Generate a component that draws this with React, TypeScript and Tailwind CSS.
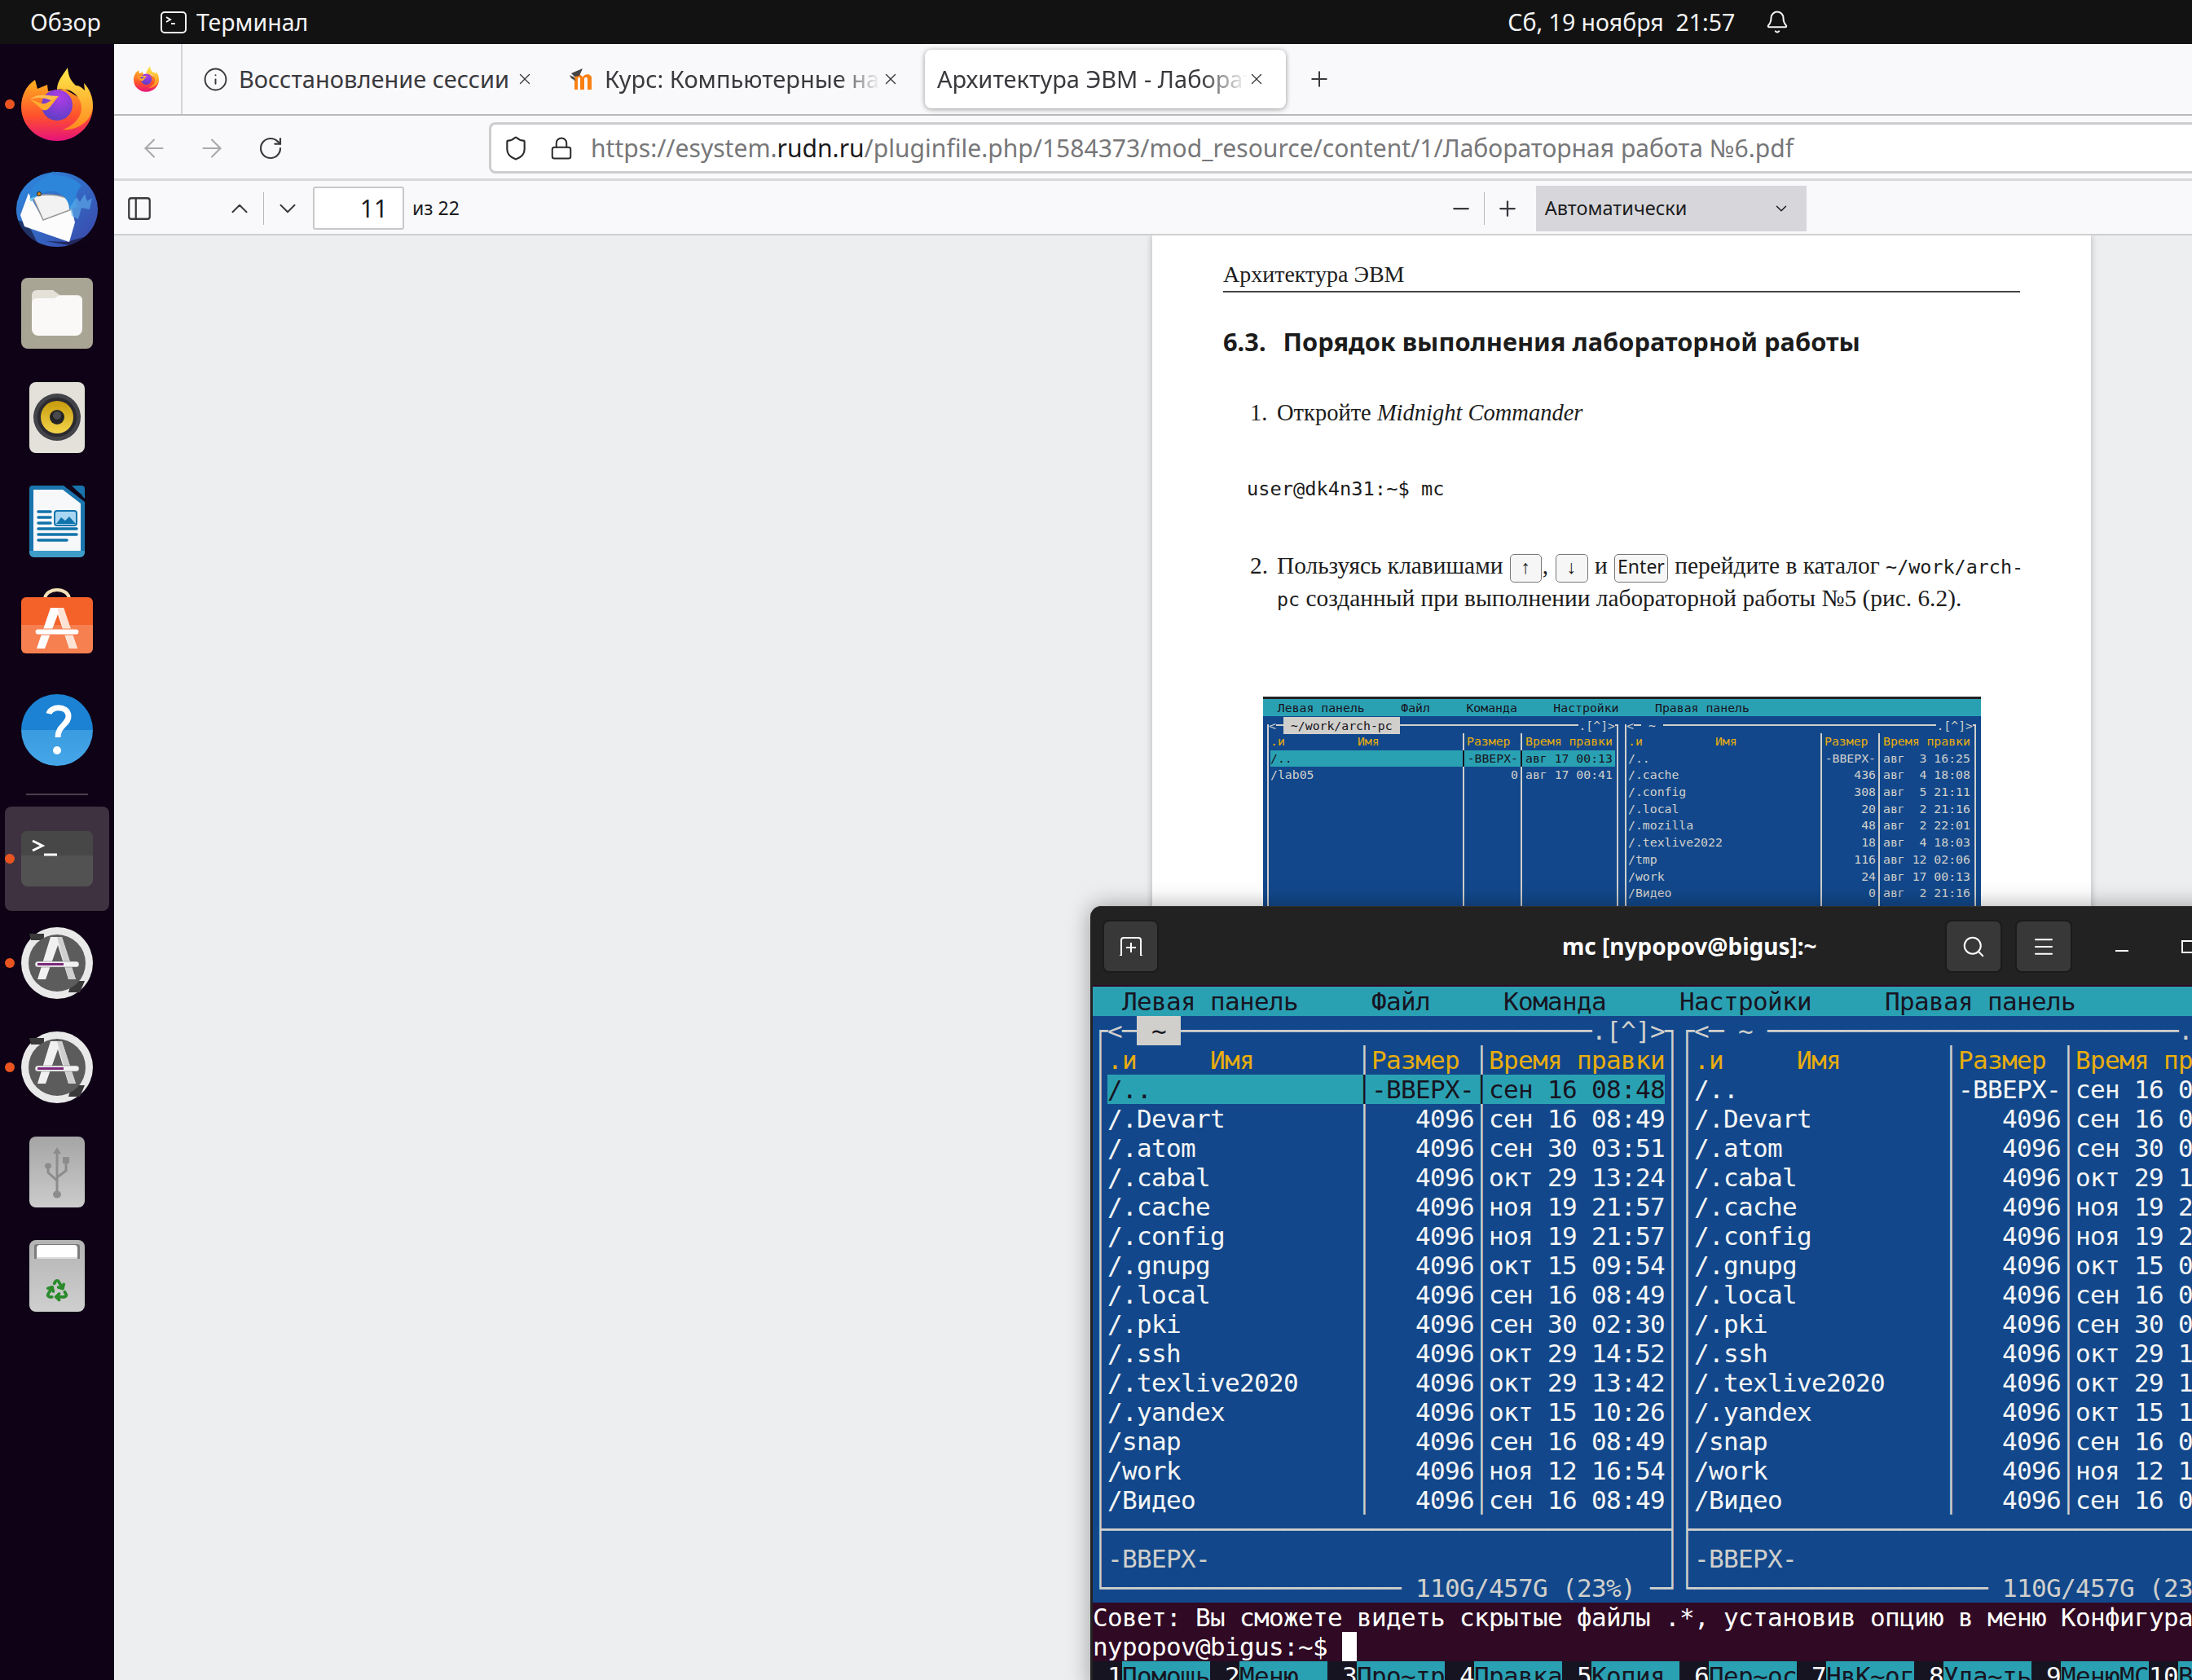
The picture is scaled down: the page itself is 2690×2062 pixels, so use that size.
import { ArrowLeft, ArrowRight, Bell, ChevronDown, ChevronUp, Info, Lock, Menu, Minus, PanelLeft, Plus, Recycle, RotateCw, Search, Shield, X } from 'lucide-react'
import clsx from 'clsx'

type Seg = [string, string]

const F = 'text-[#d0cfcc]'
const W = 'text-[#f6f6f6]'
const Y = 'text-[#e9ad0c]'
const HL = 'bg-[#2aa1b3] text-[#171421]'

const MENU = '  Левая панель     Файл     Команда     Настройки     Правая панель'

const FILES = [
  ['/..', '-ВВЕРХ-', 'сен 16 08:48'],
  ['/.Devart', '4096', 'сен 16 08:49'],
  ['/.atom', '4096', 'сен 30 03:51'],
  ['/.cabal', '4096', 'окт 29 13:24'],
  ['/.cache', '4096', 'ноя 19 21:57'],
  ['/.config', '4096', 'ноя 19 21:57'],
  ['/.gnupg', '4096', 'окт 15 09:54'],
  ['/.local', '4096', 'сен 16 08:49'],
  ['/.pki', '4096', 'сен 30 02:30'],
  ['/.ssh', '4096', 'окт 29 14:52'],
  ['/.texlive2020', '4096', 'окт 29 13:42'],
  ['/.yandex', '4096', 'окт 15 10:26'],
  ['/snap', '4096', 'сен 16 08:49'],
  ['/work', '4096', 'ноя 12 16:54'],
  ['/Видео', '4096', 'сен 16 08:49'],
]

const FKEYS = ['Помощь', 'Меню  ', 'Про~тр', 'Правка', 'Копия ', 'Пер~ос', 'НвК~ог', 'Уда~ть', 'МенюМС', 'Выход ']

const FIG_LEFT = [
  ['/..', '-ВВЕРХ-', 'авг 17 00:13'],
  ['/lab05', '0', 'авг 17 00:41'],
]

const FIG_RIGHT = [
  ['/..', '-ВВЕРХ-', 'авг  3 16:25'],
  ['/.cache', '436', 'авг  4 18:08'],
  ['/.config', '308', 'авг  5 21:11'],
  ['/.local', '20', 'авг  2 21:16'],
  ['/.mozilla', '48', 'авг  2 22:01'],
  ['/.texlive2022', '18', 'авг  4 18:03'],
  ['/tmp', '116', 'авг 12 02:06'],
  ['/work', '24', 'авг 17 00:13'],
  ['/Видео', '0', 'авг  2 21:16'],
  ['/Документы', '0', 'авг  2 21:16'],
]

function Row({ segs, className }: { segs: Seg[]; className?: string }) {
  return (
    <div className={clsx('h-[36px] overflow-hidden whitespace-pre leading-[36px]', className)}>
      {segs.map(([text, cls], i) => (
        <span key={i} className={cls}>{text}</span>
      ))}
    </div>
  )
}

function fileCells(file: string[], hl: boolean): Seg[] {
  const c = hl ? HL : W
  const sep = hl ? HL : F
  return [
    ['│', F],
    [file[0].padEnd(17), c],
    ['│', sep],
    [file[1].padStart(7), c],
    ['│', sep],
    [file[2], c],
    ['│', F],
  ]
}

const header: Seg[] = [
  ['│', F],
  ['.и     Имя       ', Y],
  ['│', F],
  ['Размер ', Y],
  ['│', F],
  ['Время правки', Y],
  ['│', F],
]

const sepLine = '├' + '─'.repeat(38) + '┤'
const statusLine = '│' + '-ВВЕРХ-'.padEnd(38) + '│'
const bottomLine = '└' + '─'.repeat(20) + ' 110G/457G (23%) ─┘'

function Terminal() {
  return (
    <div className="absolute left-[1338px] top-[1112px] w-[1440px] rounded-t-[14px] bg-[#222222] shadow-[0_0_28px_rgba(0,0,0,0.35)]">
      <div className="flex h-[97px] items-center rounded-t-[14px] border-t border-[#333333] pl-[15px] pt-[1px]">
        <button className="flex h-[65px] w-[69px] items-center justify-center rounded-[8px] border-2 border-[#1b1b1b] bg-[#383838]">
          <svg width="30" height="23" viewBox="0 0 30 23" fill="none" stroke="white" strokeWidth="2">
            <path d="M1 23h2V4a3 3 0 0 1 3-3h18a3 3 0 0 1 3 3v19h2" />
            <path d="M15 7v12M9 13h12" />
          </svg>
        </button>
        <div className="ml-[495px] mb-[2px] w-[400px] font-['Noto_Sans',sans-serif] text-[28px] font-bold text-white">mc [nypopov@bigus]:~</div>
        <button className="ml-[70px] flex h-[65px] w-[70px] items-center justify-center rounded-[8px] border-2 border-[#1b1b1b] bg-[#383838] text-white">
          <Search size={30} strokeWidth={1.6} />
        </button>
        <button className="ml-[16px] flex h-[65px] w-[70px] items-center justify-center rounded-[8px] border-2 border-[#1b1b1b] bg-[#383838] text-white">
          <Menu size={30} strokeWidth={1.6} />
        </button>
        <div className="ml-[53px] mt-[10px] h-[2px] w-[16px] bg-white" />
        <div className="ml-[65px] h-[16px] w-[16px] border-2 border-white" />
      </div>
      <div className="ml-[3px] bg-[#300a24] pt-[2px] font-['DejaVu_Sans_Mono',monospace] text-[31px] tracking-[-0.664px]">
        <Row segs={[[MENU, 'text-[#171421]']]} className="bg-[#2aa1b3]" />
        <div className="bg-[#12488b]">
          <Row
            segs={[
              ['┌<─', F],
              [' ~ ', 'bg-[#d0cfcc] text-[#171421]'],
              ['─'.repeat(28) + '.[^]>┐', F],
              ['┌<─ ~ ' + '─'.repeat(28) + '.[^]>┐', F],
            ]}
          />
          <Row segs={[...header, ...header]} />
          {FILES.map((file, i) => (
            <Row key={file[0]} segs={[...fileCells(file, i === 0), ...fileCells(file, false)]} />
          ))}
          <Row segs={[[sepLine + sepLine, F]]} />
          <Row segs={[[statusLine + statusLine, F]]} />
          <Row segs={[[bottomLine + bottomLine, F]]} />
        </div>
        <Row segs={[['Совет: Вы сможете видеть скрытые файлы .*, установив опцию в меню Конфигурация', 'text-white']]} />
        <Row segs={[['nypopov@bigus:~$ ', 'text-white'], [' ', 'bg-white']]} />
        <Row
          className="bg-[#171421]"
          segs={FKEYS.flatMap((label, i): Seg[] => [
            [String(i + 1).padStart(2), 'text-white'],
            [label, HL],
          ])}
        />
      </div>
    </div>
  )
}

function FigRow({ file, hl }: { file: string[]; hl?: boolean }) {
  return (
    <div className={clsx('grid h-[20.700px] grid-cols-[238px_71px_1fr] whitespace-pre leading-[20.700px]', hl ? 'bg-[#2aa1b3] text-[#171421]' : 'text-[#d0cfcc]')}>
      <div className={clsx('border-r-[2px]', hl ? 'border-[#171421]' : 'border-[#d0cfcc]')}>{file[0]}</div>
      <div className={clsx('border-r-[2px] pr-[3px] text-right', hl ? 'border-[#171421]' : 'border-[#d0cfcc]')}>{file[1]}</div>
      <div className="pl-[4px]">{file[2]}</div>
    </div>
  )
}

function FigPanel({ files, active }: { files: string[][]; active?: boolean }) {
  return (
    <div className="relative h-[300px] w-[431px] border-x-2 border-t-2 border-[#d0cfcc] px-[2px] pt-[9px]">
      <div className="absolute left-[0px] top-[-11px] flex h-[21px] items-center whitespace-pre leading-[21px] text-[#d0cfcc]">
        <span className="bg-[#12488b]">&lt;</span>
        {active ? (
          <span className="ml-[9px] bg-[#d0cfcc] px-[9px] text-[#171421]">~/work/arch-pc</span>
        ) : (
          <span className="ml-[9px] bg-[#12488b] px-[9px]">~</span>
        )}
      </div>
      <div className="absolute right-[2px] top-[-11px] h-[21px] whitespace-pre bg-[#12488b] leading-[21px] text-[#d0cfcc]">.[^]&gt;</div>
      <div className="grid h-[20.700px] grid-cols-[238px_71px_1fr] whitespace-pre leading-[20.700px] text-[#e9ad0c]">
        <div className="border-r-[2px] border-[#d0cfcc]">{'.и          Имя'}</div>
        <div className="border-r-[2px] border-[#d0cfcc] pl-[3px]">Размер</div>
        <div className="pl-[4px]">Время правки</div>
      </div>
      {files.map((file, i) => (
        <FigRow key={file[0]} file={file} hl={active && i === 0} />
      ))}
      <div className="grid h-[200px] grid-cols-[238px_71px_1fr]">
        <div className="border-r-[2px] border-[#d0cfcc]" />
        <div className="border-r-[2px] border-[#d0cfcc]" />
        <div />
      </div>
    </div>
  )
}

function Figure() {
  return (
    <div className="ml-[49px] mt-[100px] h-[340px] w-[881px] overflow-hidden border-t-[3px] border-[#222222] bg-[#12488b] font-['DejaVu_Sans_Mono',monospace] text-[14.800px]">
      <div className="h-[21px] whitespace-pre bg-[#2aa1b3] leading-[21px] text-[#171421]">{MENU}</div>
      <div className="flex gap-[8px] pl-[5px] pt-[10px]">
        <FigPanel files={FIG_LEFT} active />
        <FigPanel files={FIG_RIGHT} />
      </div>
    </div>
  )
}

function Key({ children, w }: { children: React.ReactNode; w: string }) {
  return (
    <span className={clsx("-my-[6px] mx-[1px] inline-flex h-[35px] items-center justify-center rounded-[5px] border border-[#777777] bg-[#f6f6f6] pb-[3px] align-baseline font-['Noto_Sans',sans-serif] text-[23px] leading-none", w)}>
      {children}
    </span>
  )
}

function PdfPage() {
  return (
    <div className="h-[1900px] w-[1152px] bg-white px-[87px] font-['Liberation_Serif',serif] text-[#1c1c1c] shadow-[0_0_8px_rgba(0,0,0,0.25)]">
      <div className="border-b-2 border-[#444444] pb-[5px] pt-[33px] text-[28px] leading-[30px]">Архитектура ЭВМ</div>
      <h2 className="mt-[38px] flex whitespace-pre font-['Noto_Sans',sans-serif] text-[30.800px] font-bold leading-[44px]">
        <span>6.3.</span>
        <span className="ml-[21px]">Порядок выполнения лабораторной работы</span>
      </h2>
      <div className="mt-[47px] flex pl-[33px] text-[28.500px] leading-[38px]">
        <span className="w-[33px] shrink-0">1.</span>
        <span>
          Откройте <i>Midnight Commander</i>
        </span>
      </div>
      <div className="mt-[57px] pl-[29px] font-['DejaVu_Sans_Mono',monospace] text-[23.700px] leading-[34px]">user@dk4n31:~$ mc</div>
      <div className="mt-[58px] flex whitespace-nowrap pl-[33px] text-[29.400px] leading-[38px]">
        <span className="w-[33px] shrink-0">2.</span>
        <span>
          Пользуясь клавишами <Key w="w-[39px]">↑</Key>, <Key w="w-[40px]">↓</Key> и <Key w="w-[66px]">Enter</Key> перейдите в каталог{' '}
          <span className="font-['DejaVu_Sans_Mono',monospace] text-[23.400px]">~/work/arch-</span>
          <br />
          <span className="font-['DejaVu_Sans_Mono',monospace] text-[23.400px]">pc</span> созданный при выполнении лабораторной работы №5 (рис. 6.2).
        </span>
      </div>
      <Figure />
    </div>
  )
}

function Firefox({ size = 88 }: { size?: number }) {
  return (
    <svg width={size} height={(size * 90) / 88} viewBox="0 0 88 90">
      <defs>
        <linearGradient id="ffBody" x1="0" y1="0" x2="0" y2="1">
          <stop offset="0" stopColor="#ffb31f" />
          <stop offset="0.6" stopColor="#ff4f2d" />
          <stop offset="1" stopColor="#e6127c" />
        </linearGradient>
        <linearGradient id="ffFlame" x1="0.5" y1="0" x2="0.5" y2="1">
          <stop offset="0" stopColor="#ffe94a" />
          <stop offset="1" stopColor="#ff8a1f" />
        </linearGradient>
        <radialGradient id="ffGlobe" cx="0.6" cy="0.25" r="0.9">
          <stop offset="0" stopColor="#b13ce6" />
          <stop offset="1" stopColor="#4e3fbf" />
        </radialGradient>
      </defs>
      <path d="M17 15l3 11 12-5 1 8 20-3 20 12c2 10 15 10 15 10C88 71 68 90 44 90 20 90 0 72 0 48 0 35 6 22 17 15z" fill="url(#ffBody)" />
      <circle cx="44" cy="46" r="19" fill="url(#ffGlobe)" />
      <path d="M11 39c8-3 18-3 27 2l8-6c-8 0-14-2-22-1-5 0-10 2-13 5z" fill="#ffbd4f" />
      <path d="M11 39c8 1 14 8 21 4l14-8-8 10c-6 9-10 9-15 4-4-4-9-7-12-10z" fill="#ffab2e" />
      <path d="M57 0c1 9 2 14 10 22 5-1 11 6 11 6l-1-9c7 7 11 17 11 27 0 18-18 32-37 30 12-4 23-14 23-27 0-10-8-20-18-22-6-1-9-1-12 0C44 16 52 8 57 0z" fill="url(#ffFlame)" />
    </svg>
  )
}

function Thunderbird() {
  return (
    <svg width="100" height="93" viewBox="0 0 100 93">
      <defs>
        <linearGradient id="tbRing" x1="0" y1="0" x2="1" y2="1">
          <stop offset="0" stopColor="#2c8be0" />
          <stop offset="1" stopColor="#3b46a8" />
        </linearGradient>
      </defs>
      <ellipse cx="50" cy="47" rx="50" ry="46" fill="url(#tbRing)" />
      <path d="M0 60c4 14 14 22 26 28l-8-16-10-10zM36 86l40 7c8-2 14-8 20-16l-34 10z" fill="#10061a" opacity="0.55" />
      <path d="M5 54l10-27 18 33 35-13 4 16-7 24-55-19z" fill="#fcfcfc" />
      <path d="M20 31l13 29 35-13-3-12c-10-6-30-8-45-4z" fill="#f2f2f2" stroke="#999999" strokeWidth="1.500" />
      <path d="M18 37c-2-6-2-14 4-20 6-5 14-11 24-17l-3 5c14-1 30 4 37 13-6 6-8 14-6 26l-9 3c0-10-6-18-18-22-10-2-18 2-29 12z" fill="#2d86d9" />
      <path d="M18 37l-2-3 8-3z" fill="#6fd0ea" />
      <circle cx="28" cy="28" r="2.500" fill="#d98a1a" stroke="#222222" />
      <path d="M66 44l8-12 4 6 6-10 3 9 6-4-3 14-10-2-4 14-8-4z" fill="#5fb2ec" opacity="0.6" />
    </svg>
  )
}

function Files() {
  return (
    <div className="flex h-[87px] w-[88px] items-center justify-center rounded-[8px] bg-[#a9a594]">
      <svg width="62" height="56" viewBox="0 0 62 56">
        <path d="M0 6a6 6 0 0 1 6-6h20l8 6h22a6 6 0 0 1 6 6v8H0z" fill="#e4e1d8" />
        <path d="M0 16a6 6 0 0 1 6-6h22l5-3h23a6 6 0 0 1 6 6v35a8 8 0 0 1-8 8H8a8 8 0 0 1-8-8z" fill="#faf9f7" />
      </svg>
    </div>
  )
}

function Rhythmbox() {
  return (
    <div className="flex h-[87px] w-[68px] items-center justify-center rounded-[8px] bg-[#e4e1da]">
      <svg width="58" height="58" viewBox="0 0 58 58">
        <defs>
          <linearGradient id="rbCone" x1="0" y1="0" x2="0" y2="1">
            <stop offset="0" stopColor="#c79c0d" />
            <stop offset="1" stopColor="#f3d34a" />
          </linearGradient>
        </defs>
        <circle cx="29" cy="29" r="29" fill="#43434a" />
        <circle cx="29" cy="29" r="24" fill="#2a2a30" />
        <circle cx="29" cy="29" r="20" fill="url(#rbCone)" />
        <circle cx="29" cy="29" r="9" fill="#232326" />
        <circle cx="29" cy="27" r="5" fill="#4a4a4e" />
      </svg>
    </div>
  )
}

function Writer() {
  return (
    <svg width="68" height="88" viewBox="0 0 68 88">
      <path d="M4 0h38l26 20v62a6 6 0 0 1-6 6H6a6 6 0 0 1-6-6V4a4 4 0 0 1 4-4z" fill="#1a75ae" />
      <path d="M52 0h12a4 4 0 0 1 4 4v12z" fill="#1a75ae" />
      <path d="M48 0l16 13" stroke="#10061a" strokeWidth="3" />
      <path d="M5 5h36l22 17v58a3 3 0 0 1-3 3H8a3 3 0 0 1-3-3z" fill="#f7f8fa" />
      <path d="M0 80h68v2a6 6 0 0 1-6 6H6a6 6 0 0 1-6-6z" fill="#3e9dc8" />
      <path d="M11 32h15M11 39h15M11 46h15M11 53h47M11 60h47M11 67h35" stroke="#1173ab" strokeWidth="3.500" strokeLinecap="round" />
      <rect x="31" y="31" width="27" height="18" rx="3" fill="#a8d6f2" stroke="#1173ab" strokeWidth="2" />
      <path d="M33 47l6-8 5 4 5-5 8 9z" fill="#1173ab" />
    </svg>
  )
}

function Software() {
  return (
    <svg width="88" height="96" viewBox="0 0 88 96">
      <path d="M29 16c0-16 30-16 30 0" fill="none" stroke="#f4e0b8" strokeWidth="4" />
      <path d="M0 19a6 6 0 0 1 6-6h76a6 6 0 0 1 6 6v28H0z" fill="#f4622a" />
      <path d="M0 47h88v29a6 6 0 0 1-6 6H6a6 6 0 0 1-6-6z" fill="#f68050" />
      <path d="M19 76l17-50h16l17 50h-10l-14-42-16 42z" fill="#fff" />
      <path d="M44 26h8l17 50H59z" fill="#fde3d5" />
      <rect x="17" y="52" width="54" height="7" rx="3.500" fill="#fff" stroke="#f68050" strokeWidth="1" />
    </svg>
  )
}

function Help() {
  return (
    <svg width="88" height="88" viewBox="0 0 88 88">
      <defs>
        <linearGradient id="helpBg" x1="0" y1="0" x2="0" y2="1">
          <stop offset="0" stopColor="#1b82d4" />
          <stop offset="0.5" stopColor="#1b82d4" />
          <stop offset="0.5" stopColor="#3a9be0" />
          <stop offset="1" stopColor="#45a7e8" />
        </linearGradient>
      </defs>
      <circle cx="44" cy="44" r="44" fill="url(#helpBg)" />
      <path d="M34 24c2-9 22-11 24 2 1 11-13 12-13 27" fill="none" stroke="#fff" strokeWidth="7" />
      <circle cx="44" cy="69" r="5" fill="#fff" />
    </svg>
  )
}

function TerminalIcon() {
  return (
    <svg width="88" height="68" viewBox="0 0 88 68">
      <rect width="88" height="68" rx="8" fill="#525252" />
      <path d="M0 8a8 8 0 0 1 8-8h72a8 8 0 0 1 8 8v22H0z" fill="#474747" />
      <path d="M14 12l12 6-12 6" fill="none" stroke="#fff" strokeWidth="3" />
      <path d="M28 29h16" stroke="#fff" strokeWidth="3" />
    </svg>
  )
}

function Updater() {
  return (
    <svg width="88" height="88" viewBox="0 0 88 88">
      <circle cx="44" cy="44" r="44" fill="#e9e9e9" />
      <path d="M10 8h18v8H12zM78 66h-16l-4 14h14z" fill="#3a3a3a" />
      <circle cx="44" cy="44" r="35" fill="#5c5c5c" />
      <path d="M20 64l16-52h14l17 52h-9l-13-42-15 42z" fill="#f1f1f1" />
      <path d="M44 12h6l17 52h-9z" fill="#cfcfcf" />
      <rect x="17" y="42" width="54" height="7" rx="3.500" fill="#f1f1f1" stroke="#6a6a6a" strokeWidth="0.500" />
      <rect x="20" y="44" width="32" height="3" fill="#7d2a7c" />
    </svg>
  )
}

function UsbTile() {
  return (
    <div className="h-[87px] w-[68px] rounded-[8px] bg-gradient-to-b from-[#a5a5a5] to-[#cccccc]">
      <svg width="68" height="87" viewBox="0 0 68 87" fill="#8c8c8c" stroke="#8c8c8c">
        <path d="M34 20v50" fill="none" strokeWidth="3" />
        <path d="M34 13l5 8H29z" stroke="none" />
        <ellipse cx="34" cy="71" rx="5" ry="4.500" stroke="none" />
        <ellipse cx="23" cy="36" rx="4" ry="3.500" stroke="none" />
        <rect x="41" y="25" width="8" height="8" stroke="none" />
        <path d="M23 36v8l11 10M45 32v10l-11 8" fill="none" strokeWidth="3" />
      </svg>
    </div>
  )
}

function Trash() {
  return (
    <div className="relative flex h-[88px] w-[68px] flex-col items-center justify-end rounded-[8px] bg-gradient-to-b from-[#b4b4b4] to-[#cfcfcf] pb-[12px]">
      <div className="absolute left-[6px] top-[5px] h-[18px] w-[56px] rounded-t-[3px] bg-[#7c7c7c]" />
      <div className="absolute left-[9px] top-[6px] h-[17px] w-[50px] rounded-t-[4px] border-b-2 border-[#dddddd] bg-white" />
      <Recycle size={30} strokeWidth={3} className="text-[#2a8a2a]" />
    </div>
  )
}

function DockItem({ children, running, active }: { children: React.ReactNode; running?: boolean; active?: boolean }) {
  return (
    <div className="relative flex h-[128px] w-full items-center justify-center">
      {active && <div className="absolute inset-x-[6px] inset-y-0 rounded-[8px] bg-[#3e3240]" />}
      {running && <div className="absolute left-[6px] top-[58px] z-10 h-[12px] w-[12px] rounded-full bg-[#e95420]" />}
      <div className="relative">{children}</div>
    </div>
  )
}

function Dock() {
  return (
    <aside className="flex w-[140px] shrink-0 flex-col bg-[#0f0216] pt-[10px]">
      <DockItem running><Firefox /></DockItem>
      <DockItem><Thunderbird /></DockItem>
      <DockItem><Files /></DockItem>
      <DockItem><Rhythmbox /></DockItem>
      <DockItem><Writer /></DockItem>
      <DockItem><Software /></DockItem>
      <DockItem><Help /></DockItem>
      <div className="mx-auto my-[14px] h-[2px] w-[76px] bg-[#4a3f4d]" />
      <DockItem running active><TerminalIcon /></DockItem>
      <DockItem running><Updater /></DockItem>
      <DockItem running><Updater /></DockItem>
      <DockItem><UsbTile /></DockItem>
      <DockItem><Trash /></DockItem>
    </aside>
  )
}

function TopBar() {
  return (
    <header className="flex h-[54px] items-center bg-[#121212] pl-[37px] font-['Noto_Sans',sans-serif] text-[28.500px] text-[#f4f4f4]">
      <span>Обзор</span>
      <svg className="ml-[73px]" width="32" height="27" viewBox="0 0 32 27" fill="none" stroke="#f4f4f4" strokeWidth="2">
        <rect x="1" y="1" width="30" height="25" rx="4" />
        <path d="M7 7l5 3-5 3M13 15h5" />
      </svg>
      <span className="ml-[12px]">Терминал</span>
      <span className="ml-[1472px] whitespace-pre">Сб, 19 ноября  21:57</span>
      <Bell className="ml-[37px]" size={30} strokeWidth={1.6} />
    </header>
  )
}

function Moodle() {
  return (
    <svg width="32" height="30" viewBox="0 0 32 30">
      <path d="M6 28V14c0-6 8-6 10-1 2-5 11-5 11 1v14h-5V15c0-3-4-3-4 0v13h-5V15c0-3-3-3-3 0v13z" fill="#f98012" />
      <path d="M0 10l6 3 1 4h-1c-1-2-3-2-4-3zM2 8l14-6-4 9-6 1z" fill="#444444" />
    </svg>
  )
}

function TabBar() {
  return (
    <div className="flex h-[88px] items-center border-b-2 border-[#b8b8bb] text-[#3a3a3e]">
      <div className="flex h-full w-[84px] items-center border-r-2 border-[#d4d4d8] pl-[24px]">
        <Firefox size={31} />
      </div>
      <Info className="ml-[25px]" size={31} strokeWidth={1.5} />
      <span className="ml-[13px] w-[335px] whitespace-nowrap">Восстановление сессии</span>
      <X className="ml-[5px]" size={22} strokeWidth={1.5} />
      <div className="ml-[44px]"><Moodle /></div>
      <span className="ml-[11px] w-[338px] overflow-hidden whitespace-nowrap [mask-image:linear-gradient(to_right,black_85%,transparent)]">Курс: Компьютерные науки</span>
      <X className="ml-[2px]" size={22} strokeWidth={1.5} />
      <div className="ml-[31px] flex h-[72px] w-[443px] items-center rounded-[8px] bg-white pl-[15px] shadow-[0_1px_6px_rgba(0,0,0,0.4)]">
        <span className="w-[381px] overflow-hidden whitespace-nowrap [mask-image:linear-gradient(to_right,black_85%,transparent)]">Архитектура ЭВМ - Лабораторная</span>
        <X size={22} strokeWidth={1.5} />
      </div>
      <Plus className="ml-[26px]" size={30} strokeWidth={1.6} />
    </div>
  )
}

function NavBar() {
  return (
    <div className="flex h-[80px] items-center border-b-[3px] border-[#d8d8da] pt-[2px]">
      <ArrowLeft className="ml-[31px] text-[#a8a8aa]" size={36} strokeWidth={1.4} />
      <ArrowRight className="ml-[35px] text-[#a8a8aa]" size={36} strokeWidth={1.4} />
      <RotateCw className="ml-[38px] text-[#3a3a3e]" size={32} strokeWidth={1.6} />
      <div className="ml-[252px] flex h-[63px] flex-1 items-center rounded-l-[8px] border-[3px] border-r-0 border-[#cdcdcf] bg-white pl-[14px]">
        <Shield size={32} strokeWidth={1.6} className="text-[#2b2b2e]" />
        <Lock className="ml-[25px] text-[#2b2b2e]" size={30} strokeWidth={1.6} />
        <div className="ml-[21px] whitespace-nowrap text-[30.050px] text-[#777779]">
          https://esystem.<span className="text-[#1a1a1c]">rudn.ru</span>/pluginfile.php/1584373/mod_resource/content/1/Лабораторная работа №6.pdf
        </div>
      </div>
    </div>
  )
}

function PdfToolbar() {
  return (
    <div className="flex h-[67px] items-center border-b-2 border-[#cfcfd1] pt-[2px] text-[23.500px] text-[#1c1c1e]">
      <PanelLeft className="ml-[14px] text-[#3a3a3e]" size={34} strokeWidth={1.6} />
      <ChevronUp className="ml-[89px] text-[#3a3a3e]" size={34} strokeWidth={1.4} />
      <div className="ml-[12px] h-[40px] w-[1px] bg-[#b8b8bb]" />
      <ChevronDown className="ml-[12px] text-[#3a3a3e]" size={34} strokeWidth={1.4} />
      <div className="ml-[14px] flex h-[53px] w-[112px] items-center justify-end rounded-[3px] border-2 border-[#c8c8ca] bg-white pr-[18px] text-[30px]">11</div>
      <span className="ml-[10px] text-[23px]">из 22</span>
      <Minus className="ml-[1214px] text-[#3a3a3e]" size={30} strokeWidth={1.8} />
      <div className="ml-[13px] h-[40px] w-[1px] bg-[#b8b8bb]" />
      <Plus className="ml-[13px] text-[#3a3a3e]" size={30} strokeWidth={1.8} />
      <div className="ml-[20px] flex h-[56px] w-[332px] items-center justify-between bg-[#d7d7db] pl-[11px] pr-[20px]">
        <span>Автоматически</span>
        <ChevronDown size={22} strokeWidth={1.6} />
      </div>
    </div>
  )
}

export default function App() {
  return (
    <div className="relative h-[2062px] w-[2690px] overflow-hidden bg-[#0f0216]">
      <TopBar />
      <div className="flex h-[2008px]">
        <Dock />
        <main className="flex min-w-0 flex-1 flex-col bg-[#f9f9fb] font-['Noto_Sans',sans-serif] text-[29px]">
          <TabBar />
          <NavBar />
          <PdfToolbar />
          <div className="flex-1 overflow-hidden bg-[#edeef0] pl-[1274px]">
            <PdfPage />
          </div>
        </main>
      </div>
      <Terminal />
    </div>
  )
}
